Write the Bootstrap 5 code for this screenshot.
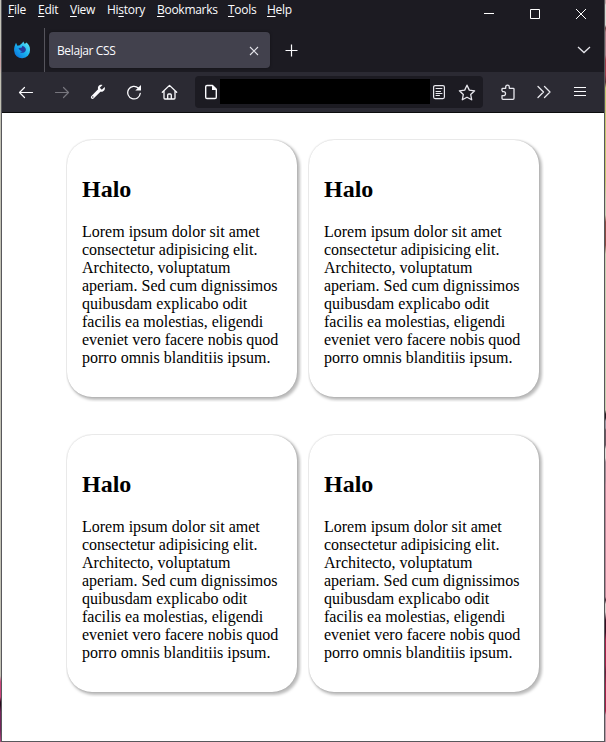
<!DOCTYPE html>
<html lang="id">
<head>
<meta charset="utf-8">
<title>Belajar CSS</title>
<link rel="stylesheet" href="https://cdn.jsdelivr.net/npm/bootstrap@5.3.0/dist/css/bootstrap.min.css">
<style>
  body { width: 606px; height: 742px; overflow: hidden; background: #fff; }
  .desktop { width: 606px; height: 742px; }
  .edge { width: 1px; flex: none; }
  .edge-left { background: linear-gradient(#c4c3b8 0 48px, #c9a5a5 56px 66px, #c1c0b3 74px 676px, #c9447a 682px 697px, #2a0a1c 702px 705px, #73265b 712px 730px, #b0487e 742px); }
  .edge-right { background: linear-gradient(#bfa3a3 0 3px, #d8d8d0 5px 25px, #6b4040 28px, #a97f86 32px 55px, #a03c48 60px 75px, #5a3030 82px, #c6c66e 88px 180px, #c9cfae 200px 215px, #8a4a42 222px 245px, #c9cfae 254px 410px, #261a20 414px 418px, #9a94a0 421px 428px, #6c5560 430px 445px, #ded9d3 449px 458px, #a08792 462px 480px, #b98596 485px 597px, #3d1c2b 600px, #ded0ce 604px 612px, #3a0c22 620px 632px, #a52049 640px 665px, #6b1d3a 672px, #a52049 685px 711px, #b995a4 715px 742px); }
  .app-window { border: solid #58585c; border-width: 0 1px 1px; min-width: 0; }
  .chrome { background: #1c1b22; color: #fbfbfe; font: 12px/16px "Open Sans", "Noto Sans", sans-serif; height: 72px; }
  .chrome svg, .toolbar svg { display: block; flex: none; }
  .menus { display: grid; grid-template-columns: 30px 32px 37px 50px 71px 39px 40px; padding: 2px 0 0 6px; letter-spacing: -.28px; height: 28px; }
  .menus u { text-underline-offset: 2px; text-decoration-thickness: 1px; }
  .controls { padding: 2px 16px 2px 0; gap: 32px; }
  .tabs { height: 44px; }
  .pinned { width: 43px; border-right: 1px solid #55545c; padding-left: 11px; }
  .page-tab { width: 221px; height: 36px; margin-left: 4px; padding: 1px 11px 0 8px; border-radius: 4px; background: #42414d; letter-spacing: -.38px; box-shadow: 0 0 3px rgba(0,0,0,.4); }
  .new-tab { margin-left: 15px; }
  .toolbar { height: 41px; background: #2b2a33; border-bottom: 1px solid #0c0c0d; padding-left: 16px; color: #fbfbfe; }
  .tool { margin-left: 20px; }
  .tool-near { margin-left: 19px; }
  .address { width: 288px; height: 32px; background: #1c1b22; border-radius: 4px; margin-left: 17px; padding: 0 7px 0 8px; }
  .hidden-url { width: 210px; height: 25px; background: #000; margin: 0 3px 1px 1px; }
  .page { display: grid; grid-template-columns: 230px 230px; grid-auto-rows: 257px; gap: 38px 12px; padding: 27px 0 0 65px; background: #fff; color: #000; font: 16px/18px "Liberation Serif", "Times New Roman", serif; }
  .box { padding: 16px 15px 14px; border-radius: 25px; box-shadow: 0 0 2px rgba(0,0,0,.2), 2px 2px 3px 1px rgba(0,0,0,.26); clip-path: inset(-1px -5px -5px -1px); }
  .box h2 { font: bold 24px/27px "Liberation Serif", "Times New Roman", serif; margin: 20px 0; }
  .box p { margin: 0; white-space: nowrap; }
</style>
<script src="https://cdn.jsdelivr.net/npm/bootstrap@5.3.0/dist/js/bootstrap.bundle.min.js"></script>
</head>
<body>
<div class="desktop d-flex">
  <div class="edge edge-left"></div>
  <div class="app-window flex-grow-1 d-flex flex-column">
    <header class="chrome">
      <div class="d-flex justify-content-between">
        <nav class="menus">
          <span><u>F</u>ile</span><span><u>E</u>dit</span><span><u>V</u>iew</span><span>Hi<u>s</u>tory</span><span><u>B</u>ookmarks</span><span><u>T</u>ools</span><span><u>H</u>elp</span>
        </nav>
        <div class="controls d-flex align-items-center">
          <svg width="14" height="14" viewBox="0 0 14 14" stroke="#fff" fill="none"><path d="M2 6.500h10"/></svg>
          <svg width="14" height="14" viewBox="0 0 14 14" stroke="#fff" fill="none"><path d="M2.500 2.500h9v9h-9z"/></svg>
          <svg width="14" height="14" viewBox="0 0 14 14" stroke="#fff" fill="none"><path d="M2 2l10 10M12 2L2 12"/></svg>
        </div>
      </div>
      <div class="tabs d-flex align-items-center">
        <div class="pinned h-100 d-flex align-items-center">
          <svg width="18" height="18" viewBox="0 0 18 18">
            <defs><linearGradient id="flame" x1="1" y1="0" x2="0" y2="1"><stop stop-color="#6cf0f5"/><stop offset=".5" stop-color="#18b0f0"/><stop offset="1" stop-color="#0868d8"/></linearGradient></defs>
            <path fill="url(#flame)" d="M3 1.800l1.400 3 2.400-.6C7.500 2.800 9.200 2.800 10.200.4l1.600 2.600 1.600-1.600c2.400 1.900 3.800 4.200 3.600 7.600A7.900 7.900 0 0 1 1.100 9.600C.9 6.600 1.800 4.400 3 1.800z"/>
            <path fill="#253b9c" d="M5.500 7l3-.3 1-2c2.600 1 4 3 3.200 5.100-.8 2.100-4 2.700-5.700 1.200l2.500-.7C8 10 5.800 9 5.500 7z"/>
          </svg>
        </div>
        <div class="page-tab d-flex align-items-center justify-content-between">
          <span>Belajar CSS</span>
          <svg width="10" height="10" viewBox="0 0 10 10" stroke="#e4e4ea" fill="none" stroke-width="1.100"><path d="M1 1l8 8M9 1L1 9"/></svg>
        </div>
        <svg class="new-tab" width="13" height="13" viewBox="0 0 13 13" stroke="#fbfbfe" fill="none" stroke-width="1.200"><path d="M6.500 .5v12M.5 6.500h12"/></svg>
        <svg class="ms-auto me-2" width="24" height="16" viewBox="0 0 24 16" stroke="#e4e4ea" fill="none" stroke-width="1.300"><path d="M6 5l6 5.500L18 5"/></svg>
      </div>
    </header>
    <div class="toolbar d-flex align-items-center flex-shrink-0">
      <svg width="16" height="16" viewBox="0 0 16 16" stroke="#fbfbfe" fill="none" stroke-width="1.200" stroke-linecap="round" stroke-linejoin="round"><path d="M14.500 8.500h-13M6.500 3.500l-5 5 5 5"/></svg>
      <svg class="tool" width="16" height="16" viewBox="0 0 16 16" stroke="#77767e" fill="none" stroke-width="1.200" stroke-linecap="round" stroke-linejoin="round"><path d="M1.500 8.500h13M9.500 3.500l5 5-5 5"/></svg>
      <svg class="tool" width="16" height="16" viewBox="0 0 16 16"><path fill="#fbfbfe" d="M14.700 3.100l-2.900 2.700-2-2L12.500 1C9.700.2 7.200 2.500 8.100 5.300L1.200 12.200c-1.200 1.500.8 3.600 2.400 2.400l6.800-6.900c3.100.8 5.200-1.900 4.300-4.600z"/><circle cx="2.800" cy="13" r=".7" fill="#2b2a33"/></svg>
      <svg class="tool" width="16" height="16" viewBox="0 0 16 16"><path stroke="#fbfbfe" fill="none" stroke-width="1.300" stroke-linecap="round" d="M14.300 9.300A6.300 6.300 0 1 1 12.300 4"/><path fill="#fbfbfe" d="M15 1v5.500H9.300z"/></svg>
      <svg class="tool-near" width="17" height="16" viewBox="0 0 17 16" stroke="#fbfbfe" fill="none" stroke-width="1.300" stroke-linecap="round" stroke-linejoin="round"><path d="M1.300 8.200l7.200-6.800 7.200 6.800M3 7v7q0 1 1 1h9q1 0 1-1V7M6.700 15v-4q0-1 1-1h1.600q1 0 1 1v4"/></svg>
      <div class="address d-flex align-items-center">
        <svg width="16" height="16" viewBox="0 0 16 16"><path stroke="#fbfbfe" fill="none" stroke-width="1.400" stroke-linejoin="round" d="M9.500 1.500H4q-1.300 0-1.300 1.300v10.400q0 1.300 1.300 1.300h8q1.300 0 1.300-1.300V5.300z"/><path fill="#fbfbfe" d="M9 1l5 5H9z"/></svg>
        <div class="hidden-url"></div>
        <svg width="12" height="16" viewBox="0 0 12 16" stroke="#e8e8ee" fill="none" stroke-width="1.200" stroke-linecap="round"><rect x=".6" y="1.600" width="10.800" height="13" rx="1.500"/><path d="M3 4.500h6M3 7.500h4.500M3 9.500h6M3 11.500h3.500" stroke-width="1"/></svg>
        <svg class="ms-auto" width="18" height="17" viewBox="0 0 18 17" stroke="#e8e8ee" fill="none" stroke-width="1.300" stroke-linejoin="round"><path d="M9 1.200l2.300 4.900 5.300.7-3.900 3.700 1 5.300L9 13.200l-4.700 2.600 1-5.300-3.900-3.700 5.300-.7z"/></svg>
      </div>
      <svg style="margin-left:17px" width="16" height="17" viewBox="0 0 16 17" stroke="#e8e8ee" fill="none" stroke-width="1.300" stroke-linejoin="round"><path d="M2 7.200V5q0-.7.700-.7h3V3c0-2.600 3.600-2.600 3.600 0v1.300h4q.7 0 .7.700v9.300q0 1-1 1H3q-1 0-1-1v-2.600h1.500c2.700 0 2.700-4 0-4H2"/></svg>
      <svg class="tool" width="16" height="16" viewBox="0 0 16 16" stroke="#e8e8ee" fill="none" stroke-width="1.300" stroke-linecap="round" stroke-linejoin="round"><path d="M2 2.500L7.500 8 2 13.500M8.500 2.500L14 8l-5.500 5.500"/></svg>
      <svg style="margin-left:21px" width="14" height="14" viewBox="0 0 14 14" stroke="#fbfbfe" fill="none" stroke-width="1.100"><path d="M1 2.500h12M1 6.500h12M1 10.500h12"/></svg>
    </div>
    <main class="page flex-grow-1 align-content-start">
      <section class="box"><h2>Halo</h2><p>Lorem ipsum dolor sit amet<br>consectetur adipisicing elit.<br>Architecto, voluptatum<br>aperiam. Sed cum dignissimos<br>quibusdam explicabo odit<br>facilis ea molestias, eligendi<br>eveniet vero facere nobis quod<br>porro omnis blanditiis ipsum.</p></section>
      <section class="box"><h2>Halo</h2><p>Lorem ipsum dolor sit amet<br>consectetur adipisicing elit.<br>Architecto, voluptatum<br>aperiam. Sed cum dignissimos<br>quibusdam explicabo odit<br>facilis ea molestias, eligendi<br>eveniet vero facere nobis quod<br>porro omnis blanditiis ipsum.</p></section>
      <section class="box"><h2>Halo</h2><p>Lorem ipsum dolor sit amet<br>consectetur adipisicing elit.<br>Architecto, voluptatum<br>aperiam. Sed cum dignissimos<br>quibusdam explicabo odit<br>facilis ea molestias, eligendi<br>eveniet vero facere nobis quod<br>porro omnis blanditiis ipsum.</p></section>
      <section class="box"><h2>Halo</h2><p>Lorem ipsum dolor sit amet<br>consectetur adipisicing elit.<br>Architecto, voluptatum<br>aperiam. Sed cum dignissimos<br>quibusdam explicabo odit<br>facilis ea molestias, eligendi<br>eveniet vero facere nobis quod<br>porro omnis blanditiis ipsum.</p></section>
    </main>
  </div>
  <div class="edge edge-right"></div>
</div>
</body>
</html>
